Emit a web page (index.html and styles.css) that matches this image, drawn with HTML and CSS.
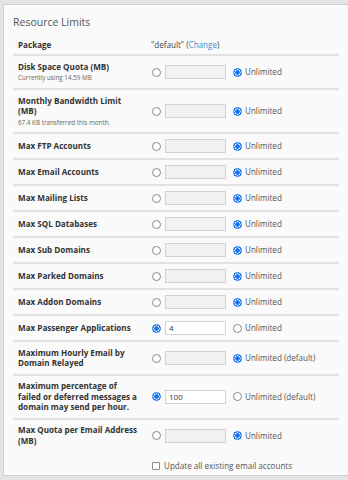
FILE: index.html
```html
<!DOCTYPE html>
<html>
<head>
<meta charset="utf-8">
<link rel="stylesheet" href="styles.css">
</head>
<body>
<div class="panel">
  <div class="title">Resource Limits</div>
  <div class="tbl">
    <div class="row head">
      <div class="label">Package</div>
      <div class="val">"default" (<a class="link">Change</a>)</div>
    </div>
    <div class="row r34">
      <div class="label">Disk Space Quota (MB)<div class="sub">Currently using 14.59 MB</div></div>
      <div class="val"><span class="radio"></span><span class="box dis"></span><span class="radio on"></span><span class="opt">Unlimited</span></div>
    </div>
    <div class="row r44">
      <div class="label">Monthly Bandwidth Limit (MB)<div class="sub">67.4 KB transferred this month.</div></div>
      <div class="val"><span class="radio"></span><span class="box dis"></span><span class="radio on"></span><span class="opt">Unlimited</span></div>
    </div>
    <div class="row">
      <div class="label">Max FTP Accounts</div>
      <div class="val"><span class="radio"></span><span class="box dis"></span><span class="radio on"></span><span class="opt">Unlimited</span></div>
    </div>
    <div class="row">
      <div class="label">Max Email Accounts</div>
      <div class="val"><span class="radio"></span><span class="box dis"></span><span class="radio on"></span><span class="opt">Unlimited</span></div>
    </div>
    <div class="row">
      <div class="label">Max Mailing Lists</div>
      <div class="val"><span class="radio"></span><span class="box dis"></span><span class="radio on"></span><span class="opt">Unlimited</span></div>
    </div>
    <div class="row">
      <div class="label">Max SQL Databases</div>
      <div class="val"><span class="radio"></span><span class="box dis"></span><span class="radio on"></span><span class="opt">Unlimited</span></div>
    </div>
    <div class="row">
      <div class="label">Max Sub Domains</div>
      <div class="val"><span class="radio"></span><span class="box dis"></span><span class="radio on"></span><span class="opt">Unlimited</span></div>
    </div>
    <div class="row">
      <div class="label">Max Parked Domains</div>
      <div class="val"><span class="radio"></span><span class="box dis"></span><span class="radio on"></span><span class="opt">Unlimited</span></div>
    </div>
    <div class="row">
      <div class="label">Max Addon Domains</div>
      <div class="val"><span class="radio"></span><span class="box dis"></span><span class="radio on"></span><span class="opt">Unlimited</span></div>
    </div>
    <div class="row">
      <div class="label">Max Passenger Applications</div>
      <div class="val"><span class="radio on"></span><span class="box">4</span><span class="radio"></span><span class="opt">Unlimited</span></div>
    </div>
    <div class="row r34">
      <div class="label">Maximum Hourly Email by Domain Relayed</div>
      <div class="val"><span class="radio"></span><span class="box dis"></span><span class="radio on"></span><span class="opt">Unlimited (default)</span></div>
    </div>
    <div class="row r43">
      <div class="label">Maximum percentage of failed or deferred messages a domain may send per hour.</div>
      <div class="val"><span class="radio on"></span><span class="box">100</span><span class="radio"></span><span class="opt">Unlimited (default)</span></div>
    </div>
    <div class="row r34 last">
      <div class="label">Max Quota per Email Address (MB)</div>
      <div class="val"><span class="radio"></span><span class="box dis"></span><span class="radio on"></span><span class="opt">Unlimited</span></div>
    </div>
    <div class="row check">
      <div class="label"></div>
      <div class="val"><span class="cb"></span><span class="cbtext">Update all existing email accounts</span></div>
    </div>
  </div>
</div>
</body>
</html>
```
FILE: styles.css
```css
html, body {
  margin: 0;
  padding: 0;
  background: #e4e4e4;
  overflow: hidden;
  height: 480px;
}
body {
  font-family: "Open Sans", "Liberation Sans", sans-serif;
  font-size: 8.1px;
  color: #333;
}
.panel {
  margin: 4px 0 0 3px;
  width: 360px;
  box-sizing: border-box;
  background: #fafafa;
  border: 1px solid #cfcfcf;
  padding: 10px 9px 0 9px;
  height: 472px;
}
.title {
  font-size: 10.5px;
  line-height: 14px;
  color: #555;
}
.tbl {
  width: 326px;
  margin-top: 4px;
}
.row {
  display: flex;
  align-items: center;
  box-sizing: border-box;
  min-height: 26px;
  border-bottom: 2px solid #e2e2e2;
  padding: 5px 0;
}
.row.head {
  min-height: 22px;
  padding: 6px 0 3px;
  align-items: center;
}
.row.r34 { min-height: 34px; }
.row.r44 { min-height: 44px; }
.row.r43 { min-height: 43px; }
.row.last { border-bottom: 2px solid transparent; }
.row.check { border-bottom: none; min-height: 24px; padding: 4px 0; }
.label {
  width: 138px;
  flex: none;
  box-sizing: border-box;
  padding: 0 11px 0 5px;
  font-weight: 700;
  line-height: 10.5px;
  color: #333;
}
.head .label { line-height: 12px; }
.sub {
  font-weight: 400;
  font-size: 6.3px;
  line-height: 9px;
  color: #666;
  margin-top: 1px;
}
.val {
  display: flex;
  align-items: center;
  color: #555;
  line-height: 12px;
}
.head .val { color: #444; padding-left: 0; }
.link { color: #3b8ed4; }
.radio {
  width: 9px;
  height: 9px;
  box-sizing: border-box;
  border-radius: 50%;
  border: 1px solid #8a8a8a;
  background: #fff;
  flex: none;
  margin-left: 1px;
}
.radio.on {
  border: 1px solid #1a73e8;
  background: radial-gradient(circle, #1a73e8 0 2px, #ffffff 2.6px 2.9px, #1a73e8 3.3px);
}
.box {
  width: 61px;
  height: 14px;
  box-sizing: border-box;
  border: 1px solid #d2d2d2;
  background: #fff;
  margin-left: 4px;
  margin-right: 6px;
  padding-left: 3px;
  font-size: 8px;
  line-height: 12px;
  color: #333;
  flex: none;
}
.box.dis { background: #f1f1f1; }
.opt {
  margin-left: 3px;
  color: #555;
}
.cb {
  width: 8px;
  height: 8px;
  box-sizing: border-box;
  border: 1px solid #8a8a8a;
  border-radius: 1px;
  background: #fff;
  margin-left: 1px;
  flex: none;
}
.cbtext {
  margin-left: 4px;
  color: #555;
}
```
